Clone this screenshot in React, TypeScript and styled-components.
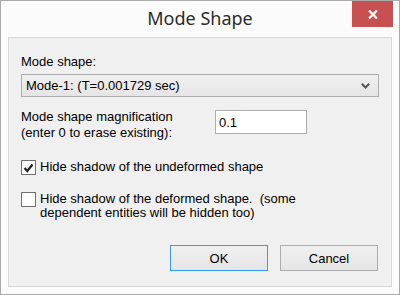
import React from "react";
import styled, { createGlobalStyle } from "styled-components";

const Global = createGlobalStyle`
  html, body { margin: 0; padding: 0; background: #fbfbfb; }
  * { box-sizing: border-box; }
`;

const Window = styled.div`
  width: 400px;
  height: 295px;
  border: 1px solid #aaaaaa;
  background: #fbfbfb;
  display: flex;
  flex-direction: column;
  font-family: "Liberation Sans", Arial, sans-serif;
  font-size: 13px;
  color: #000;
`;

const TitleBar = styled.div`
  height: 36px;
  position: relative;
  display: flex;
  align-items: center;
  justify-content: center;
`;

const Title = styled.div`
  font-family: "Noto Sans", "Open Sans", sans-serif;
  font-size: 18px;
  color: #2b2b2b;
  margin-top: -3px;
`;

const CloseButton = styled.div`
  position: absolute;
  top: 0;
  right: 6px;
  width: 41px;
  height: 26px;
  background: #c75050;
  display: flex;
  align-items: center;
  justify-content: center;
`;

const Panel = styled.div`
  margin: 0 7px 7px 7px;
  flex: 1;
  background: #f0f0f0;
  border: 1px solid #d9d9d9;
  padding: 16px 12px 0 12px;
  display: flex;
  flex-direction: column;
`;

const Label = styled.div`
  line-height: 15px;
`;

const Select = styled.div`
  margin-top: 5px;
  height: 23px;
  border: 1px solid #acacac;
  background: linear-gradient(#f0f0f0, #e5e5e5);
  display: flex;
  align-items: center;
  justify-content: space-between;
  padding: 0 8px 0 4px;
`;

const MagRow = styled.div`
  margin-top: 12px;
  display: flex;
  align-items: flex-start;
`;

const MagLabel = styled.div`
  width: 194px;
  line-height: 16px;
`;

const Input = styled.div`
  margin-top: 1px;
  width: 92px;
  height: 24px;
  border: 1px solid #acacac;
  background: #fff;
  display: flex;
  align-items: center;
  padding-left: 3px;
`;

const CheckRow = styled.div<{ $top: number }>`
  margin-top: ${(p) => p.$top}px;
  display: flex;
  align-items: flex-start;
`;

const Box = styled.div`
  width: 15px;
  height: 15px;
  border: 1px solid #707070;
  background: #fff;
  flex: none;
  display: flex;
  align-items: center;
  justify-content: center;
  margin-right: 4px;
`;

const CheckText = styled.div`
  line-height: 14px;
`;

const Buttons = styled.div`
  margin-top: auto;
  margin-bottom: 15px;
  margin-right: 1px;
  display: flex;
  justify-content: flex-end;
  gap: 12px;
`;

const Button = styled.div<{ $default?: boolean }>`
  width: 98px;
  height: 26px;
  border: 1px solid ${(p) => (p.$default ? "#3399ff" : "#acacac")};
  background: linear-gradient(#f0f0f0, #e5e5e5);
  display: flex;
  align-items: center;
  justify-content: center;
`;

export default function App() {
  return (
    <>
      <Global />
      <Window>
        <TitleBar>
          <Title>Mode Shape</Title>
          <CloseButton>
            <svg width="10" height="9" viewBox="0 0 10 9">
              <path d="M1 0.5 L9 8.5 M9 0.5 L1 8.5" stroke="#fff" strokeWidth="2.2" />
            </svg>
          </CloseButton>
        </TitleBar>
        <Panel>
          <Label>Mode shape:</Label>
          <Select>
            <span>Mode-1: (T=0.001729 sec)</span>
            <svg width="9" height="6" viewBox="0 0 9 6">
              <path d="M0.8 0.8 L4.5 4.5 L8.2 0.8" stroke="#555" strokeWidth="2" fill="none" />
            </svg>
          </Select>
          <MagRow>
            <MagLabel>
              Mode shape magnification
              <br />
              (enter 0 to erase existing):
            </MagLabel>
            <Input>0.1</Input>
          </MagRow>
          <CheckRow $top={19}>
            <Box>
              <svg width="11" height="10" viewBox="0 0 11 10">
                <path d="M1.5 5 L4.3 8 L9.5 1.5" stroke="#222" strokeWidth="2.2" fill="none" />
              </svg>
            </Box>
            <CheckText>Hide shadow of the undeformed shape</CheckText>
          </CheckRow>
          <CheckRow $top={17}>
            <Box />
            <CheckText>
              Hide shadow of the deformed shape.&nbsp; (some
              <br />
              dependent entities will be hidden too)
            </CheckText>
          </CheckRow>
          <Buttons>
            <Button $default>OK</Button>
            <Button>Cancel</Button>
          </Buttons>
        </Panel>
      </Window>
    </>
  );
}
